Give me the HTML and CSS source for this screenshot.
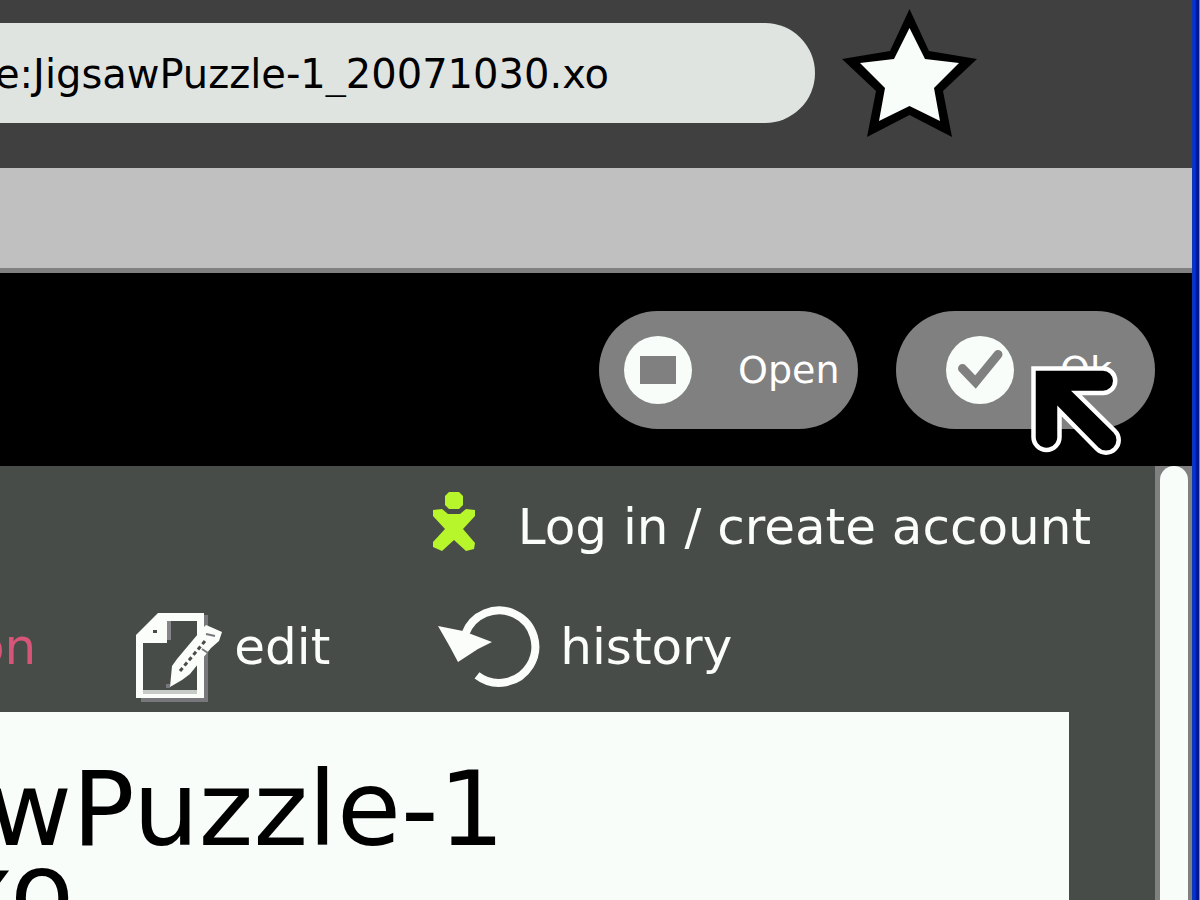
FILE: index.html
```
<!DOCTYPE html>
<html lang="en">
<head>
<meta charset="utf-8">
<title>JigsawPuzzle-1</title>
<link rel="stylesheet" href="styles.css">
</head>
<body>
<div class="window">
  <header class="toolbar">
    <input class="address" type="text" aria-label="Address" value="e:JigsawPuzzle-1_20071030.xo">
    <button class="bookmark" type="button" aria-label="Bookmark">
      <svg width="140" height="132" viewBox="840 8 140 132">
        <path fill="#000" d="M909.500 9 929 51 977 59 943 91 952 137 909.500 115 867 137 876 91 842 59 890 51Z"/>
        <path fill="#f8fdf9" d="M909.500 28 925 59 959 63 934 88 940 121 909.500 106 879 121 885 88 860 63 894 59Z"/>
      </svg>
    </button>
  </header>
  <div class="tray"></div>
  <div class="alert">
    <button class="pill" type="button">
      <svg width="68" height="68" viewBox="0 0 68 68"><circle cx="34" cy="34" r="34" fill="#f8fdf9"/><path fill="#808080" d="M16 20h36v28H16z"/></svg>
      Open
    </button>
    <button class="pill pill-ok" type="button">
      <svg width="68" height="68" viewBox="0 0 68 68"><circle cx="34" cy="34" r="34" fill="#f8fdf9"/><path d="M16.500 32.500 29.500 46 52 18.500" fill="none" stroke="#808080" stroke-width="9" stroke-linecap="round"/></svg>
      Ok
      <svg class="cursor" width="94" height="94" viewBox="1030 364 94 94"><path d="M1033.500 368.500H1103A12.250 12.250 0 0 1 1103 393H1076.500L1115 431A12.700 12.700 0 0 1 1097 449L1059.500 411V437A13 13 0 0 1 1033.500 437Z" fill="#000" stroke="#fff" stroke-width="4.500"/></svg>
    </button>
  </div>
  <div class="viewport">
    <main class="page">
      <div class="account">
        <a class="link" href="#">
          <svg class="person" width="42" height="60" viewBox="433 491 42 60"><path fill="#b8f62c" d="M449 492h10l4 4v9l-4 4h-10l-4-4v-9ZM433 510 442 509 448 514H460L466 509 475 510V516L463 529 475 543 474 549 466 551 454 540 442 551 433 547V542L445 529 433 516Z"/></svg>
          Log in / create account
        </a>
      </div>
      <nav class="tabs">
        <a class="link active" href="#">on</a>
        <a class="link edit" href="#">
          <svg class="doc" width="88" height="92" viewBox="135 612 88 92">
            <path fill="#77777c" d="M204 616h4v87h-67v-4h63z"/>
            <path fill="#fafdfa" d="M158 614h46v85h-68v-63z"/>
            <path fill="#484c48" d="M167 622h30v69h-54v-47h24z"/>
            <path fill="#85858a" d="M167 622h4v19h-4z"/>
            <path fill="#c8cac8" d="M143 691h54v4h-54z"/>
            <path fill="#484c48" d="M153 631h4v3h-4z"/>
            <path fill="#fafdfa" d="M170 688 172 667 177 660 203 629 206 626 213 629 222 633 219 642 211 649 190 675 182 681Z"/>
            <path fill="none" stroke="#484c48" stroke-width="3" stroke-dasharray="4 3" d="M180 672 205 642"/>
            <path fill="none" stroke="#77777c" stroke-width="2" d="M206 635 215 637M202 650 208 654"/>
            <path fill="#77777c" d="M166 685h4v4h-4z"/>
          </svg>
          edit
        </a>
        <a class="link history" href="#">
          <svg width="103" height="84" viewBox="438 607 103 84"><path d="M465 636.500A36.200 36.200 0 1 1 477 677.300" fill="none" stroke="#fafdfa" stroke-width="8"/><path d="M438 628 463 633 492 644 478 651 458 664 450 649Z" fill="#fafdfa"/></svg>
          history
        </a>
      </nav>
      <article class="sheet">
        <h1 class="title"><span class="first">wPuzzle-1</span> <span>xo</span></h1>
      </article>
    </main>
    <div class="scroll"><div class="thumb"></div></div>
  </div>
</div>
</body>
</html>
```
FILE: styles.css
```
* { box-sizing: border-box; }
body { margin: 0; font-family: "DejaVu Sans", sans-serif; }
svg { display: block; flex: none; }
.window {
  display: flex;
  flex-direction: column;
  height: 100vh;
  overflow: hidden;
  padding-right: 8px;
  background: linear-gradient(to left, #8088c8 1px, #00158c 1px, #00158c 3px, #0034d8 5px, #0034d8 7px, #1a3a9a 8px);
}
.toolbar {
  display: flex;
  align-items: flex-start;
  padding: 8px 212px 28px 0;
  background: #404040;
}
.address {
  flex: 1;
  min-width: 0;
  height: 100px;
  margin: 15px 25px 0 -50px;
  padding: 2px 0 0 45px;
  border: 0;
  border-radius: 50px;
  background: #dfe4e0;
  color: #000;
  font: 40px "DejaVu Sans", sans-serif;
}
.bookmark { padding: 0; border: 0; background: none; }
.tray { height: 105px; background: #c0c0c0; border-bottom: 5px solid #808080; }
.alert {
  display: flex;
  justify-content: flex-end;
  gap: 38px;
  padding: 38px 37px 37px;
  background: #000;
}
.pill {
  position: relative;
  display: flex;
  align-items: center;
  gap: 46px;
  width: 259px;
  height: 118px;
  padding: 0 0 0 25px;
  border: 0;
  border-radius: 59px;
  background: #808080;
  color: #fff;
  font: 38px "DejaVu Sans", sans-serif;
}
.pill-ok { padding-left: 50px; }
.cursor { position: absolute; left: 134px; top: 53px; }
.viewport { display: flex; flex: 1; min-height: 0; }
.page {
  display: flex;
  flex: 1;
  flex-direction: column;
  min-width: 0;
  padding-top: 1px;
  overflow: hidden;
  background: #484c48;
}
.account, .tabs { display: flex; flex: none; align-items: center; height: 120px; }
.account { justify-content: flex-end; padding-right: 64px; }
.link {
  display: flex;
  align-items: center;
  color: #fafdfa;
  font-size: 50px;
  line-height: 60px;
  text-decoration: none;
  white-space: nowrap;
}
.account .link { gap: 43px; }
.person { margin-bottom: 12px; }
.tabs { gap: 99px; margin: 0 0 5px -26px; }
.active { color: #d8557a; }
.edit { gap: 11px; padding-right: 9px; }
.doc { margin-top: 20px; }
.history { gap: 19px; }
.sheet {
  flex: 1;
  margin-right: 86px;
  padding-top: 56px;
  overflow: hidden;
  background: #f8fdf9;
}
.title {
  margin: 0 0 0 -48px;
  color: #000;
  font-size: 104px;
  font-weight: 400;
  line-height: 82px;
}
.title span { display: block; }
.title .first { padding-left: 35px; }
.scroll { width: 37px; padding: 0 4px 0 5px; background: #808080; }
.thumb { height: 100%; border-radius: 14px 14px 0 0; background: #f8fdf9; }
```
